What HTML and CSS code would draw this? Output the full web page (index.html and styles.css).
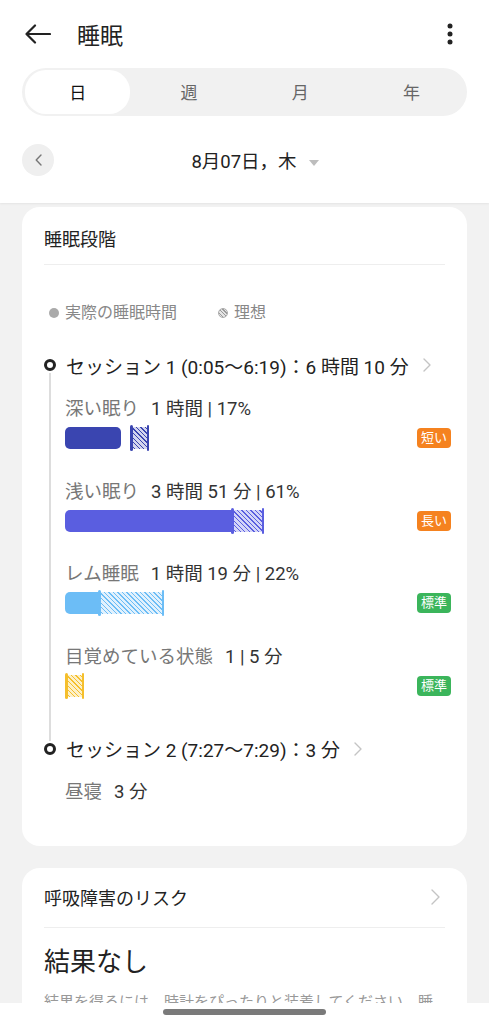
FILE: index.html
```html
<html>
    <head>
        <link rel="stylesheet" href="styles.css">
    </head>
    <body>
        <header class="appbar">
            <div class="topbar">
                <svg class="back" viewBox="0 0 26 20" width="26" height="20"><path d="M1.5 10H25M10 1.5L1.5 10l8.5 8.5" fill="none" stroke="#222" stroke-width="2.2" stroke-linecap="round" stroke-linejoin="round"/></svg>
                <h1 class="title">睡眠</h1>
                <svg class="more" viewBox="0 0 6 22" width="6" height="22"><circle cx="3" cy="3" r="2.5" fill="#222"/><circle cx="3" cy="11" r="2.5" fill="#222"/><circle cx="3" cy="19" r="2.5" fill="#222"/></svg>
            </div>
            <div class="tabs">
                <span class="tab tab-active">日</span>
                <span class="tab">週</span>
                <span class="tab">月</span>
                <span class="tab">年</span>
            </div>
            <div class="date-row">
                <button class="date-prev" type="button">
                    <svg viewBox="0 0 7 12" width="7" height="12"><path d="M6 1L1.2 6L6 11" fill="none" stroke="#777" stroke-width="1.4" stroke-linecap="round" stroke-linejoin="round"/></svg>
                </button>
                <div class="date">8月07日，木<span class="caret"></span></div>
            </div>
        </header>

        <main class="content">
            <section class="card card-stages">
                <div class="card-head">睡眠段階</div>

                <div class="legend">
                    <span class="legend-item"><span class="legend-dot"></span>実際の睡眠時間</span>
                    <span class="legend-item"><span class="legend-dot legend-dot-ideal"></span>理想</span>
                </div>

                <div class="session">
                    <span class="session-dot"></span>
                    <span>セッション 1 (0:05〜6:19)：6 時間 10 分</span>
                    <svg class="chev" viewBox="0 0 8 14" width="8" height="14"><path d="M1 1l6 6-6 6" fill="none" stroke="#c4c4c4" stroke-width="1.4" stroke-linecap="round" stroke-linejoin="round"/></svg>
                </div>

                <div class="stages">
                    <div class="stage stage-deep">
                        <div class="stage-label"><span>深い眠り</span><span class="stage-value">1 時間 | 17%</span></div>
                        <div class="stage-bars">
                            <div class="bar">
                                <span class="bar-fill bar-round" style="width:56px"></span>
                                <span class="bar-ideal bar-gap" style="width:19px"></span>
                            </div>
                            <span class="badge badge-warn">短い</span>
                        </div>
                    </div>

                    <div class="stage stage-light">
                        <div class="stage-label"><span>浅い眠り</span><span class="stage-value">3 時間 51 分 | 61%</span></div>
                        <div class="stage-bars">
                            <div class="bar">
                                <span class="bar-fill" style="width:166px"></span>
                                <span class="bar-ideal" style="width:33px"></span>
                            </div>
                            <span class="badge badge-warn">長い</span>
                        </div>
                    </div>

                    <div class="stage stage-rem">
                        <div class="stage-label"><span>レム睡眠</span><span class="stage-value">1 時間 19 分 | 22%</span></div>
                        <div class="stage-bars">
                            <div class="bar">
                                <span class="bar-fill" style="width:33px"></span>
                                <span class="bar-ideal" style="width:66px"></span>
                            </div>
                            <span class="badge badge-ok">標準</span>
                        </div>
                    </div>

                    <div class="stage stage-awake">
                        <div class="stage-label"><span>目覚めている状態</span><span class="stage-value">1 | 5 分</span></div>
                        <div class="stage-bars">
                            <div class="bar">
                                <span class="bar-ideal" style="width:19px"></span>
                            </div>
                            <span class="badge badge-ok">標準</span>
                        </div>
                    </div>
                </div>

                <div class="session">
                    <span class="session-dot"></span>
                    <span>セッション 2 (7:27〜7:29)：3 分</span>
                    <svg class="chev" viewBox="0 0 8 14" width="8" height="14"><path d="M1 1l6 6-6 6" fill="none" stroke="#c4c4c4" stroke-width="1.4" stroke-linecap="round" stroke-linejoin="round"/></svg>
                </div>
                <div class="nap"><span>昼寝</span><span class="stage-value">3 分</span></div>
            </section>

            <section class="card card-breath">
                <div class="card-head card-head-tall">
                    <span>呼吸障害のリスク</span>
                    <svg viewBox="0 0 9 16" width="9" height="16"><path d="M1 1l7 7-7 7" fill="none" stroke="#c4c4c4" stroke-width="1.4" stroke-linecap="round" stroke-linejoin="round"/></svg>
                </div>
                <div class="result">結果なし</div>
                <p class="hint">結果を得るには、時計をぴったりと装着してください。睡眠中は時計を外さないでください。</p>
            </section>
        </main>

        <div class="navbar"><div class="nav-pill"></div></div>
    </body>
</html>
```

FILE: styles.css
```css
* { box-sizing: border-box; }

body {
    margin: 0;
    background: #f2f2f2;
    color: #222;
    font-family: Roboto, "Noto Sans CJK JP", sans-serif;
}

/* header */
.appbar {
    background: #fff;
    padding-bottom: 27px;
    box-shadow: 0 1px 2px rgba(0, 0, 0, 0.06);
}

.topbar {
    align-items: center;
    display: flex;
    height: 68px;
    padding: 0 36px 0 25px;
}

.title {
    flex: 1;
    font-size: 23px;
    font-weight: 400;
    margin: 0 0 0 26px;
}

.tabs {
    align-items: center;
    background: #f1f1f1;
    border-radius: 24px;
    display: grid;
    grid-template-columns: repeat(4, 1fr);
    height: 48px;
    margin: 0 22px;
}

.tab {
    color: #666;
    font-size: 17px;
    line-height: 42px;
    margin: 0 3px;
    padding-top: 2px;
    text-align: center;
}

.tab-active {
    background: #fff;
    border-radius: 21px;
    color: #111;
}

.date-row {
    align-items: center;
    display: grid;
    grid-template-columns: 32px 1fr 32px;
    height: 32px;
    margin: 28px 22px 0;
}

.date-prev {
    background: #efefef;
    border: 0;
    border-radius: 50%;
    display: grid;
    height: 32px;
    padding: 0;
    place-items: center;
    width: 32px;
}

.date {
    font-size: 18.5px;
    padding-left: 21px;
    text-align: center;
}

.caret {
    border-left: 5px solid transparent;
    border-right: 5px solid transparent;
    border-top: 6px solid #bdbdbd;
    display: inline-block;
    height: 0;
    margin-left: 12px;
    vertical-align: middle;
    width: 0;
}

/* cards */
.content { padding: 4px 22px 40px; }

.card {
    background: #fff;
    border-radius: 18px;
    padding: 0 22px;
}

.card + .card { margin-top: 22px; }

.card-stages { padding-bottom: 42px; }

.card-head {
    align-items: center;
    border-bottom: 1px solid #eee;
    display: flex;
    font-size: 18px;
    height: 58px;
    justify-content: space-between;
    padding-top: 4px;
}

.card-head-tall {
    height: 60px;
    padding: 0 5px 0 0;
}

.legend {
    align-items: center;
    color: #888;
    display: flex;
    font-size: 16px;
    line-height: 20px;
    margin-top: 38px;
    padding-left: 5px;
}

.legend-item {
    align-items: center;
    display: flex;
}

.legend-item + .legend-item { margin-left: 41px; }

.legend-dot {
    background: #aaa;
    border-radius: 50%;
    height: 10px;
    margin-right: 6px;
    width: 10px;
}

.legend-dot-ideal {
    background: repeating-linear-gradient(45deg, #999 0 1px, #e4e4e4 1px 2.5px);
    border: 1px solid #aaa;
}

.session {
    align-items: center;
    color: #222;
    display: flex;
    font-size: 19px;
    height: 26px;
}

.card-stages .legend + .session { margin-top: 29px; }

.session-dot {
    border: 3px solid #222;
    border-radius: 50%;
    flex: none;
    height: 12px;
    margin-right: 10px;
    width: 12px;
}

.chev { margin-left: 14px; }

.stages {
    border-left: 2px solid #ddd;
    margin: -5px 0 -5px 5px;
    padding: 24px 0 44px 14px;
}

.stage + .stage { margin-top: 30.5px; }

.stage-label,
.nap {
    color: #777;
    font-size: 18.5px;
    line-height: 24px;
}

.stage-value {
    color: #333;
    margin-left: 12px;
}

.nap {
    margin-top: 18px;
    padding-left: 21px;
}

.stage-bars {
    align-items: center;
    display: flex;
    height: 22px;
    justify-content: space-between;
    margin: 6px -6px 0 0;
}

.stage-deep  { --c: #3a45b0; --soft: #d3d5ee; }
.stage-light { --c: #5a5ee0; --soft: #d4d5f8; }
.stage-rem   { --c: #6cbdf6; --soft: #e1f1fd; }
.stage-awake { --c: #f5bf2c; --soft: #fdf0c8; }

.bar {
    display: flex;
    height: 22px;
}

.bar-fill {
    background: var(--c);
    border-radius: 5px 0 0 5px;
}

.bar-round { border-radius: 5px; }

.bar-gap { margin-left: 9px; }

.bar-ideal {
    background: repeating-linear-gradient(45deg, var(--c) 0 1px, var(--soft) 1px 3.2px);
    position: relative;
}

.bar-ideal::before,
.bar-ideal::after {
    background: var(--c);
    border-radius: 2px;
    bottom: -2px;
    content: "";
    position: absolute;
    top: -2px;
    width: 2.5px;
}

.bar-ideal::before { left: 0; }
.bar-ideal::after { right: 0; }

.badge {
    border-radius: 4px;
    color: #fff;
    font-size: 13px;
    line-height: 20px;
    padding: 0 4px;
}

.badge-warn { background: #f5821f; }
.badge-ok { background: #3bb55b; }

.result {
    font-size: 26px;
    line-height: 34px;
    margin-top: 17px;
}

.hint {
    color: #999;
    font-size: 15px;
    line-height: 22px;
    margin: 12px 0 0;
}

/* gesture bar */
.navbar {
    background: #fff;
    bottom: 0;
    height: 21px;
    left: 0;
    position: fixed;
    right: 0;
}

.nav-pill {
    background: #7a7a7a;
    border-radius: 3px;
    height: 6px;
    margin: 6px auto 0;
    width: 163px;
}
```
